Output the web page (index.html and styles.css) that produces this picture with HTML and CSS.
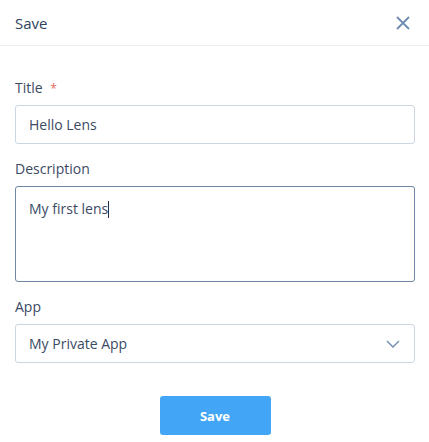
FILE: index.html
```html
<!DOCTYPE html>
<html>
<head>
<meta charset="utf-8">
<link rel="stylesheet" href="styles.css">
</head>
<body>
<div class="dialog">
  <div class="header">
    <span class="header-title">Save</span>
    <svg class="close" width="16" height="16" viewBox="0 0 16 16"><path d="M2 2L14 14M14 2L2 14" stroke="#6d8cb0" stroke-width="1.8" fill="none"/></svg>
  </div>
  <div class="form">
    <div class="field">
      <div class="label">Title <span class="req">*</span></div>
      <div class="input">Hello Lens</div>
    </div>
    <div class="field">
      <div class="label">Description</div>
      <div class="textarea focused">My first lens<span class="caret"></span></div>
    </div>
    <div class="field">
      <div class="label">App</div>
      <div class="input select">
        <span>My Private App</span>
        <svg width="14" height="8" viewBox="0 0 14 8"><path d="M1 1L7 7L13 1" stroke="#6d8cb0" stroke-width="1.4" fill="none"/></svg>
      </div>
    </div>
    <div class="actions">
      <button class="btn">Save</button>
    </div>
  </div>
</div>
</body>
</html>
```
FILE: styles.css
```css
html, body { margin: 0; padding: 0; background: #fff; }
body { font-family: "Open Sans", "Liberation Sans", sans-serif; color: #34435c; }
.dialog { width: 429px; }
.header {
  height: 46px;
  border-bottom: 1px solid #eef0f3;
  display: flex;
  align-items: center;
  justify-content: space-between;
  padding: 0 18px 0 15px;
  box-sizing: border-box;
}
.header-title { font-size: 15px; color: #2f3f5c; }
.close { display: block; }
.form { padding: 0 14px 0 15px; }
.field { display: flex; flex-direction: column; }
.label { font-size: 14px; color: #3b4a63; height: 18px; line-height: 18px; margin-top: 16px; margin-bottom: 8px; }
.field:first-child .label { margin-top: 33px; }
.req { color: #e0675e; margin-left: 4px; font-size: 12px; }
.input {
  height: 37px;
  border: 1px solid #ccd6e2;
  border-radius: 3px;
  box-sizing: content-box;
  display: flex;
  align-items: center;
  padding: 0 13px;
  font-size: 14px;
  color: #3b4a63;
}
.textarea {
  border: 1px solid #6f87a5;
  border-radius: 3px;
  padding: 12px 13px 0;
  box-sizing: border-box;
  height: 96px;
  font-size: 14px;
  color: #3b4a63;
  line-height: 19px;
}
.caret { display: inline-block; width: 1px; height: 17px; background: #1f2f4f; vertical-align: -4px; }
.select { justify-content: space-between; padding-right: 14px; }
.select svg { display: block; }
.actions { display: flex; justify-content: center; margin-top: 33px; }
.btn {
  width: 111px;
  height: 39px;
  border: none;
  border-radius: 3px;
  background: #42a5f5;
  color: #fff;
  font-family: "Open Sans", "Liberation Sans", sans-serif;
  font-weight: 700;
  font-size: 13px;
}
```
